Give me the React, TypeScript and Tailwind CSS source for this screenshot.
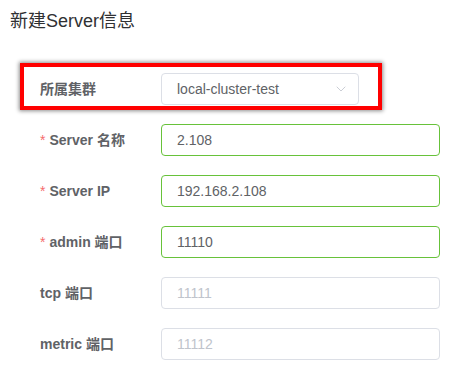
import { ChevronDown } from 'lucide-react';

const FONT = "font-['Liberation_Sans','Noto_Sans_CJK_SC',sans-serif]";

type Field = {
  label: string;
  required?: boolean;
  value?: string;
  placeholder?: string;
};

const fields: Field[] = [
  { label: 'Server 名称', required: true, value: '2.108' },
  { label: 'Server IP', required: true, value: '192.168.2.108' },
  { label: 'admin 端口', required: true, value: '11110' },
  { label: 'tcp 端口', placeholder: '11111' },
  { label: 'metric 端口', placeholder: '11112' },
];

function FormLabel({ label, required }: { label: string; required?: boolean }) {
  return (
    <div className="w-[121px] shrink-0 text-[14px] font-bold text-[#606266]">
      {required && <span className="text-[#f56c6c] mr-1 font-normal">*</span>}
      {label}
    </div>
  );
}

export default function App() {
  return (
    <div className={`${FONT} w-[459px] h-[371px] bg-white pl-[10px] pt-[9px]`}>
      <h2 className="text-[18px] leading-[24px] text-[#303133]">新建Server信息</h2>

      <div className="mt-[40px] pl-[30px] flex flex-col gap-[19px]">
        {/* cluster select, with the red highlight drawn over it */}
        <div className="relative flex items-center h-[32px]">
          <FormLabel label="所属集群" />
          <div className="w-[198px] h-[32px] border border-[#dcdfe6] rounded-[4px] flex items-center justify-between pl-[15px] pr-[9px] text-[14px] text-[#606266]">
            <span>local-cluster-test</span>
            <ChevronDown size={16} strokeWidth={1.25} className="text-[#c0c4cc]" />
          </div>
          <div className="absolute left-[-20px] top-[-10px] w-[362px] h-[47px] border-4 border-[#ff0000] shadow-[0_0_4px_1px_rgba(0,0,0,0.45)] pointer-events-none" />
        </div>

        {fields.map((f) => (
          <div key={f.label} className="flex items-center h-[32px]">
            <FormLabel label={f.label} required={f.required} />
            <div
              className={`w-[279px] h-[32px] rounded-[4px] border flex items-center px-[15px] text-[14px] ${
                f.value ? 'border-[#67c23a] text-[#606266]' : 'border-[#dcdfe6] text-[#c0c4cc]'
              }`}
            >
              {f.value ?? f.placeholder}
            </div>
          </div>
        ))}
      </div>
    </div>
  );
}
